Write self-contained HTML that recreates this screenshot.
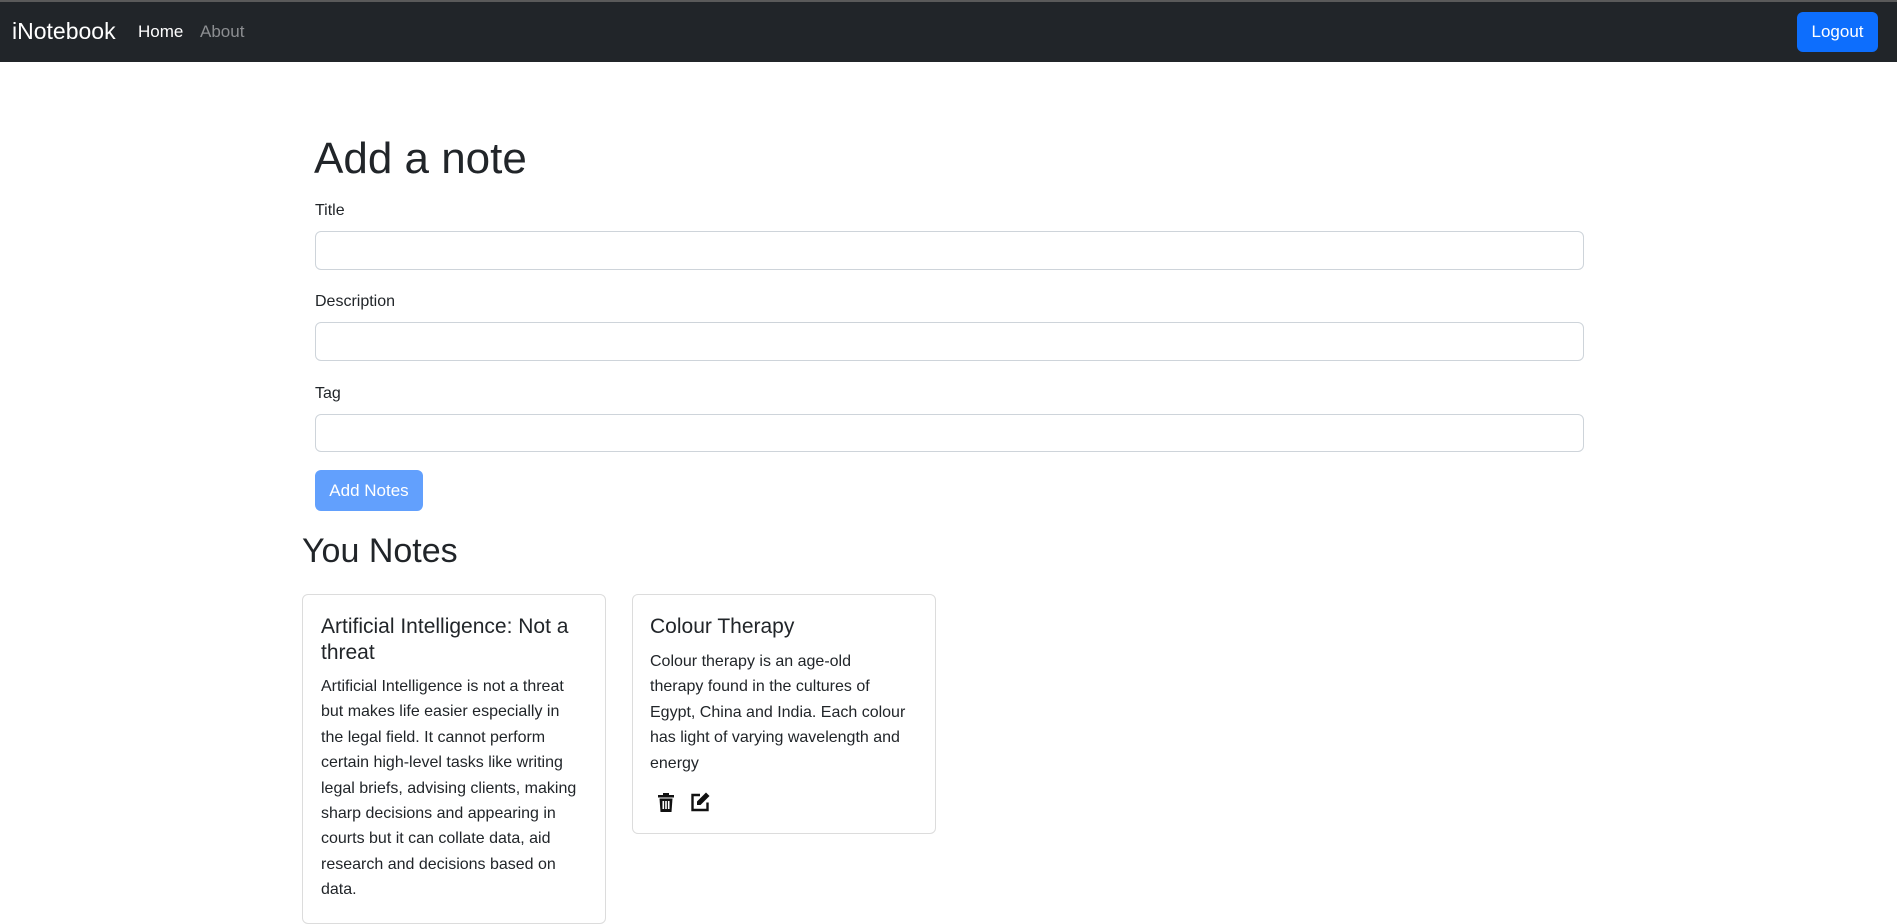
<!DOCTYPE html>
<html><head><meta charset="utf-8"><style>
*{box-sizing:border-box;margin:0;padding:0}
body{width:1897px;height:902px;overflow:hidden;background:#fff;font-family:"Liberation Sans",sans-serif;color:#212529;position:relative}
.a{position:absolute;white-space:nowrap}
.nav{position:absolute;left:0;top:0;width:1897px;height:62px;background:#212529;border-top:2px solid #5a5a5a}
.inp{position:absolute;left:315px;width:1269px;border:1px solid #ced4da;border-radius:6px;background:#fff}
.lbl{position:absolute;left:315px;font-size:16px;line-height:20px}
.card{position:absolute;border:1px solid #dcdcdc;border-radius:6px;background:#fff}
.t{font-size:16px;line-height:25.4px}
.ct{font-size:21px;line-height:25.5px}
</style></head><body>
<div class="nav"></div>
<div class="a" style="left:12px;top:18px;font-size:23px;line-height:26px;color:#fff">iNotebook</div>
<div class="a" style="left:138px;top:22px;font-size:17px;line-height:20px;color:#fff">Home</div>
<div class="a" style="left:200px;top:22px;font-size:17px;line-height:20px;color:#8c8e91">About</div>
<div class="a" style="left:1797px;top:12px;width:81px;height:40px;background:#0d6efd;border-radius:6px;color:#fff;font-size:17px;line-height:40px;text-align:center">Logout</div>

<div class="a" style="left:314px;top:133px;font-size:44px;line-height:52px">Add a note</div>
<div class="lbl" style="top:201px">Title</div>
<div class="inp" style="top:231px;height:39px"></div>
<div class="lbl" style="top:292px">Description</div>
<div class="inp" style="top:322px;height:39px"></div>
<div class="lbl" style="top:384px">Tag</div>
<div class="inp" style="top:414px;height:38px"></div>
<div class="a" style="left:315px;top:470px;width:108px;height:41px;background:#62a0fd;border-radius:6px;color:#fff;font-size:17px;line-height:41px;text-align:center">Add Notes</div>

<div class="a" style="left:302px;top:531px;font-size:34px;line-height:40px">You Notes</div>

<div class="card" style="left:302px;top:594px;width:304px;height:330px"></div>
<div class="a ct" style="left:321px;top:614px">Artificial Intelligence: Not a<br>threat</div>
<div class="a t" style="left:321px;top:674px">Artificial Intelligence is not a threat<br>but makes life easier especially in<br>the legal field. It cannot perform<br>certain high-level tasks like writing<br>legal briefs, advising clients, making<br>sharp decisions and appearing in<br>courts but it can collate data, aid<br>research and decisions based on<br>data.</div>

<div class="card" style="left:632px;top:594px;width:304px;height:240px"></div>
<div class="a ct" style="left:650px;top:614px">Colour Therapy</div>
<div class="a t" style="left:650px;top:649px">Colour therapy is an age-old<br>therapy found in the cultures of<br>Egypt, China and India. Each colour<br>has light of varying wavelength and<br>energy</div>
<svg class="a" style="left:658px;top:793px" width="16" height="19" viewBox="0 0 16 19"><rect x="0" y="2" width="16" height="2.5" fill="#111"/><rect x="5" y="0" width="6" height="2.5" fill="#111"/><path d="M1.5 5.5h13l-1 13.5h-11z" fill="#111"/><rect x="4.5" y="8" width="1.6" height="8" fill="#fff"/><rect x="7.2" y="8" width="1.6" height="8" fill="#fff"/><rect x="9.9" y="8" width="1.6" height="8" fill="#fff"/></svg>
<svg class="a" style="left:690px;top:792px" width="20" height="20" viewBox="0 0 20 20"><path d="M10 3H2.5v15h15v-7.5" fill="none" stroke="#111" stroke-width="2.4"/><path d="M16 0.5l3.5 3.5-9 9H7v-3.5z" fill="#111"/></svg>
</body></html>
